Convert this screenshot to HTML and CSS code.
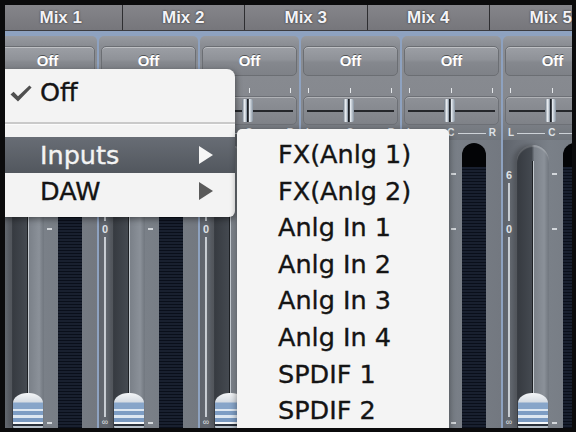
FILE: index.html
```html
<!DOCTYPE html>
<html>
<head>
<meta charset="utf-8">
<link rel="stylesheet" href="styles.css">
</head>
<body>
<div class="frame">
  <div class="screen">
    <div class="tabs">
      <div class="tab">Mix 1</div>
      <div class="tab">Mix 2</div>
      <div class="tab">Mix 3</div>
      <div class="tab">Mix 4</div>
      <div class="tab">Mix 5</div>
    </div>
    <div class="strips">
      <div class="strip">
        <div class="strip-top">
          <div class="off">Off</div>
          <div class="pan-ticks"><i></i><i></i><i></i></div>
          <div class="pan"><div class="thumb"></div></div>
          <div class="lcr"><span class="blank"></span><b></b><span>C</span><b></b><span>R</span></div>
        </div>
        <div class="strip-low">
          <div class="scale"><span class="num blank"></span><i class="sline"></i><span class="num blank"></span><i class="lline"></i><span class="inf blank"></span></div>
          <div class="groove"><div class="rail"></div><div class="knob"></div></div>
          <div class="ticks"><i></i><i></i><i class="last"></i></div>
          <div class="meter"></div>
        </div>
      </div>
      <div class="strip">
        <div class="strip-top">
          <div class="off">Off</div>
          <div class="pan-ticks"><i></i><i></i><i></i></div>
          <div class="pan"><div class="thumb"></div></div>
          <div class="lcr"><span>L</span><b></b><span>C</span><b></b><span>R</span></div>
        </div>
        <div class="strip-low">
          <div class="scale"><span class="num">6</span><i class="sline"></i><span class="num">0</span><i class="lline"></i><span class="inf">∞</span></div>
          <div class="groove"><div class="rail"></div><div class="knob"></div></div>
          <div class="ticks"><i></i><i></i><i class="last"></i></div>
          <div class="meter"></div>
        </div>
      </div>
      <div class="strip">
        <div class="strip-top">
          <div class="off">Off</div>
          <div class="pan-ticks"><i></i><i></i><i></i></div>
          <div class="pan"><div class="thumb"></div></div>
          <div class="lcr"><span>L</span><b></b><span>C</span><b></b><span>R</span></div>
        </div>
        <div class="strip-low">
          <div class="scale"><span class="num">6</span><i class="sline"></i><span class="num">0</span><i class="lline"></i><span class="inf">∞</span></div>
          <div class="groove"><div class="rail"></div><div class="knob"></div></div>
          <div class="ticks"><i></i><i></i><i class="last"></i></div>
          <div class="meter"></div>
        </div>
      </div>
      <div class="strip">
        <div class="strip-top">
          <div class="off">Off</div>
          <div class="pan-ticks"><i></i><i></i><i></i></div>
          <div class="pan"><div class="thumb"></div></div>
          <div class="lcr"><span>L</span><b></b><span>C</span><b></b><span>R</span></div>
        </div>
        <div class="strip-low">
          <div class="scale"><span class="num">6</span><i class="sline"></i><span class="num">0</span><i class="lline"></i><span class="inf">∞</span></div>
          <div class="groove"><div class="rail"></div><div class="knob"></div></div>
          <div class="ticks"><i></i><i></i><i class="last"></i></div>
          <div class="meter"></div>
        </div>
      </div>
      <div class="strip">
        <div class="strip-top">
          <div class="off">Off</div>
          <div class="pan-ticks"><i></i><i></i><i></i></div>
          <div class="pan"><div class="thumb"></div></div>
          <div class="lcr"><span>L</span><b></b><span>C</span><b></b><span>R</span></div>
        </div>
        <div class="strip-low">
          <div class="scale"><span class="num">6</span><i class="sline"></i><span class="num">0</span><i class="lline"></i><span class="inf">∞</span></div>
          <div class="groove"><div class="rail"></div><div class="knob"></div></div>
          <div class="ticks"><i></i><i></i><i class="last"></i></div>
          <div class="meter"></div>
        </div>
      </div>
      <div class="strip">
        <div class="strip-top">
          <div class="off">Off</div>
          <div class="pan-ticks"><i></i><i></i><i></i></div>
          <div class="pan"><div class="thumb"></div></div>
          <div class="lcr"><span>L</span><b></b><span>C</span><b></b><span>R</span></div>
        </div>
        <div class="strip-low">
          <div class="scale"><span class="num">6</span><i class="sline"></i><span class="num">0</span><i class="lline"></i><span class="inf">∞</span></div>
          <div class="groove"><div class="rail"></div><div class="knob"></div></div>
          <div class="ticks"><i></i><i></i><i class="last"></i></div>
          <div class="meter"></div>
        </div>
      </div>
    </div>

    <div class="menu">
      <div class="mi">
        <span class="chk"><svg width="22" height="17" viewBox="0 0 22 17"><path d="M0.5 9.5 L3.6 6.8 L8 11.2 L19.4 0.4 L21.6 2.6 L8 16.6 Z" fill="#4f4f4f"/></svg></span>
        <span class="lbl">Off</span>
      </div>
      <div class="sep"></div>
      <div class="mi hl">
        <span class="chk"></span>
        <span class="lbl">Inputs</span>
        <span class="arrow"></span>
      </div>
      <div class="mi">
        <span class="chk"></span>
        <span class="lbl">DAW</span>
        <span class="arrow"></span>
      </div>
    </div>

    <div class="submenu">
      <div class="si">FX(Anlg 1)</div>
      <div class="si">FX(Anlg 2)</div>
      <div class="si">Anlg In 1</div>
      <div class="si">Anlg In 2</div>
      <div class="si">Anlg In 3</div>
      <div class="si">Anlg In 4</div>
      <div class="si">SPDIF 1</div>
      <div class="si">SPDIF 2</div>
    </div>
  </div>
</div>
</body>
</html>
```

FILE: styles.css
```css
* { box-sizing: border-box; }
body { margin: 0; background: #000; }

.frame {
  width: 576px;
  height: 432px;
  border-style: solid;
  border-color: #0b0b0c;
  border-width: 5px 4px 4px 5px;
}
.screen {
  position: relative;
  width: 567px;
  height: 423px;
  overflow: hidden;
  background: #8ea2c0;
  font-family: "Liberation Sans", Arial, sans-serif;
}

/* header tabs */
.tabs {
  display: flex;
  margin-left: -5px;
  height: 26px;
  background: linear-gradient(#85858a, #76767b);
  border-bottom: 1px solid #3c3c40;
}
.tab {
  flex: 0 0 122.5px;
  border-right: 1px solid #2e2e31;
  color: #f3f3f7;
  font-weight: bold;
  font-size: 17px;
  line-height: 25px;
  text-align: center;
  text-shadow: 0 0 2px rgba(0,0,0,.75);
}

/* channel strips */
.strips {
  display: flex;
  gap: 2px;
  margin-left: -7px;
  padding-top: 5px;
  height: 397px;
}
.strip {
  flex: 0 0 99px;
  display: flex;
  flex-direction: column;
  border-radius: 5px 5px 0 0;
  overflow: hidden;
}
.strip-top {
  height: 104px;
  padding: 10px 2px 0;
  display: flex;
  flex-direction: column;
  background: linear-gradient(#979aa0 0, #898c92 10px, #85888e 70%, #6f747b 100%);
}
.off {
  height: 30px;
  border-radius: 5px;
  border: 1px solid #6b6e73;
  background: linear-gradient(#9c9fa5, #8f9298 45%, #85888e 55%, #7e8187);
  box-shadow: inset 0 1px 0 rgba(255,255,255,.35);
  color: #fff;
  font-weight: bold;
  font-size: 15px;
  line-height: 28px;
  text-align: center;
  text-shadow: 0 -1px 0 rgba(0,0,0,.45);
}
.pan-ticks {
  margin-top: 12px;
  height: 5px;
  display: flex;
  justify-content: space-between;
  padding: 0 6px 0 5px;
}
.pan-ticks i { width: 1px; background: #e4e7ea; }
.pan {
  position: relative;
  margin-top: 3px;
  height: 29px;
  border-radius: 5px;
  border: 1px solid #6d7076;
  background: linear-gradient(#8e9197, #7f8288);
  box-shadow: inset 0 1px 0 rgba(255,255,255,.3);
  display: flex;
  justify-content: center;
  align-items: center;
}
.pan::before {
  content: "";
  position: absolute;
  left: 3px;
  right: 3px;
  top: 13px;
  height: 2px;
  background: #25272b;
}
.thumb {
  position: relative;
  width: 11px;
  height: 23px;
  margin-right: 4px;
  border-radius: 2px;
  background: linear-gradient(to right, #68727e 0, #f2f6fa 25%, #8793a0 44%, #1c2026 44%, #1c2026 58%, #eef3f8 64%, #8894a1 100%);
}
.lcr {
  margin-top: 2px;
  height: 12px;
  display: flex;
  align-items: center;
  padding: 0 3px;
  color: #dde1e5;
  font-weight: bold;
  font-size: 10px;
  line-height: 12px;
}
.lcr b { flex: 1; height: 1px; margin: 0 3px; background: #cdd2d7; }
.lcr .blank { width: 6px; }

.strip-low {
  flex: 1;
  display: flex;
  background: linear-gradient(to right, #5f646c 0, #686d75 14px, #7a8088 46px, #737880 100%);
}
.scale {
  width: 14px;
  display: flex;
  flex-direction: column;
  align-items: center;
  padding: 30px 3px 2px 1px;
  color: #e0e4e8;
}
.num { font-weight: bold; font-size: 11px; line-height: 10px; }
.num.blank { height: 10px; }
.sline { width: 2px; height: 38px; margin: 3px 0; background: #c9ced4; }
.lline { width: 2px; flex: 1; margin: 3px 0 2px; background: #c9ced4; }
.inf { font-size: 9px; line-height: 7px; }
.inf.blank { height: 7px; }

.groove {
  width: 32px;
  margin-top: 5px;
  border-radius: 16px 16px 0 0;
  background: linear-gradient(to right, #363a40 0%, #444950 46%, #7b8189 54%, #8b9199 85%, #6f757d 100%);
  box-shadow: -4px 0 4px rgba(0,0,0,.22), inset 0 2px 1px rgba(255,255,255,.2);
  display: flex;
  flex-direction: column;
  align-items: center;
}
.rail {
  flex: 1;
  width: 2px;
  margin-top: 16px;
  background: linear-gradient(to right, #1d2024 50%, #c3c9cf 50%);
}
.knob {
  width: 30px;
  height: 35px;
  border-radius: 14px 14px 1px 1px / 10px 10px 1px 1px;
  background: linear-gradient(#f4f6f8 0, #d6dce3 9px, #87a5c9 10px, #87a5c9 16px, #dde7f1 16px, #dde7f1 18px, #7d9dc4 18px, #7d9dc4 22px, #dde7f1 22px, #dde7f1 25px, #7898c0 25px, #7898c0 29px, #f4f7fa 29px, #f4f7fa 31px, #2a313c 31px, #2a313c 33px, #b8c2cc 33px);
}
.ticks {
  width: 14px;
  display: flex;
  flex-direction: column;
  padding-left: 3px;
}
.ticks i { width: 5px; height: 2px; background: #d3d7db; margin-top: 33px; }
.ticks i + i { margin-top: 53px; }
.ticks i.last { margin-top: auto; margin-bottom: 4px; }
.meter {
  width: 24px;
  margin-top: 3px;
  border-radius: 12px 12px 0 0;
  background:
    linear-gradient(#030406 0, #030406 24px, transparent 24px),
    repeating-linear-gradient(#19202f 0, #19202f 2px, #0a0f1a 2px, #0a0f1a 3px);
}

/* pop-up menu */
.menu {
  position: absolute;
  left: -5px;
  top: 64px;
  width: 235px;
  padding: 5px 0 7px;
  background: #f3f3f3;
  border-radius: 0 8px 6px 0;
  box-shadow: 1px 2px 6px rgba(0,0,0,.45);
  font-family: "DejaVu Sans", sans-serif;
  font-size: 25.5px;
  color: #141414;
  -webkit-text-stroke: 0.35px currentColor;
}
.mi {
  display: flex;
  align-items: center;
  height: 36.5px;
  line-height: 36.5px;
}
.chk { width: 40px; padding-left: 10px; display: flex; align-items: center; padding-top: 3px; }
.lbl { flex: 1; }
.arrow {
  width: 0;
  height: 0;
  border-left: 14px solid #5a5a5a;
  border-top: 9px solid transparent;
  border-bottom: 9px solid transparent;
  margin-right: 22px;
}
.sep {
  height: 3px;
  margin: 11.5px 0;
  border-top: 2px solid #c9c9c9;
  border-bottom: 1px solid #fbfbfb;
}
.mi.hl {
  background: linear-gradient(#686d75, #52575e);
  color: #f3f3f3;
}
.mi.hl .arrow { border-left-color: #f6f6f6; }

.submenu {
  position: absolute;
  left: 232px;
  top: 124px;
  width: 212px;
  height: 310px;
  padding: 7px 0 0 41px;
  background: #f4f4f4;
  border-radius: 5px 5px 0 0;
  box-shadow: 0 2px 7px rgba(0,0,0,.45);
  font-family: "DejaVu Sans", sans-serif;
  font-size: 25.5px;
  color: #141414;
  -webkit-text-stroke: 0.35px currentColor;
}
.si { height: 36.6px; line-height: 36.6px; white-space: nowrap; }
```
